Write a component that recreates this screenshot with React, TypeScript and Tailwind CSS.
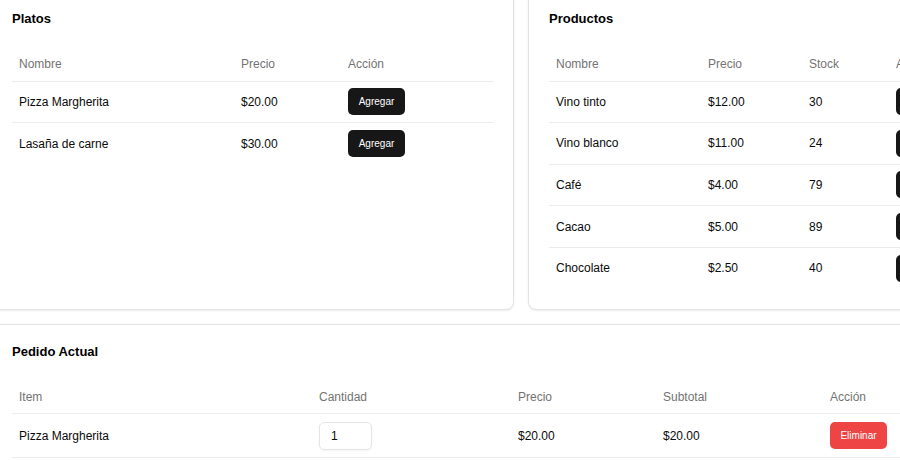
import React from "react";

const platos = [
  { nombre: "Pizza Margherita", precio: "$20.00" },
  { nombre: "Lasaña de carne", precio: "$30.00" },
];

const productos = [
  { nombre: "Vino tinto", precio: "$12.00", stock: 30 },
  { nombre: "Vino blanco", precio: "$11.00", stock: 24 },
  { nombre: "Café", precio: "$4.00", stock: 79 },
  { nombre: "Cacao", precio: "$5.00", stock: 89 },
  { nombre: "Chocolate", precio: "$2.50", stock: 40 },
];

function AddButton() {
  return (
    <button className="w-[57px] h-[27px] rounded-[5px] bg-[#171717] text-white text-[10px] leading-none">
      Agregar
    </button>
  );
}

function Card({ title, children }: { title: string; children: React.ReactNode }) {
  return (
    <div className="bg-white border border-[#e3e3e3] rounded-lg shadow-[0_1px_2px_rgba(0,0,0,0.08)] px-5 pt-5 pb-5">
      <h2 className="text-[13px] leading-[14px] font-bold text-black">{title}</h2>
      <div className="mt-[14px]">{children}</div>
    </div>
  );
}

const th = "px-[7px] pt-2 text-left font-normal text-[12px] text-[#737373]";
const td = "px-[7px] text-[12px] text-[#0a0a0a]";

export default function App() {
  return (
    <div
      className="w-[900px] h-[460px] overflow-hidden bg-white"
      style={{ fontFamily: '"Liberation Sans", Arial, sans-serif' }}
    >
      <div className="w-[1060px] -mt-[9px] -ml-[9px] flex flex-col gap-[14px]">
        <div className="grid grid-cols-2 gap-[14px]">
          <Card title="Platos">
            <table className="w-[481px] table-fixed border-collapse">
              <thead>
                <tr className="h-[41px] border-b border-[#ececec]">
                  <th className={`${th} w-[222px]`}>Nombre</th>
                  <th className={`${th} w-[107px]`}>Precio</th>
                  <th className={th}>Acción</th>
                </tr>
              </thead>
              <tbody>
                {platos.map((p, i) => (
                  <tr
                    key={p.nombre}
                    className={`h-[41.6px] ${i < platos.length - 1 ? "border-b border-[#ececec]" : ""}`}
                  >
                    <td className={td}>{p.nombre}</td>
                    <td className={td}>{p.precio}</td>
                    <td className={td}>
                      <AddButton />
                    </td>
                  </tr>
                ))}
              </tbody>
            </table>
          </Card>

          <Card title="Productos">
            <table className="w-[481px] table-fixed border-collapse">
              <thead>
                <tr className="h-[41px] border-b border-[#ececec]">
                  <th className={`${th} w-[152px]`}>Nombre</th>
                  <th className={`${th} w-[101px]`}>Precio</th>
                  <th className={`${th} w-[87px]`}>Stock</th>
                  <th className={th}>Acción</th>
                </tr>
              </thead>
              <tbody>
                {productos.map((p, i) => (
                  <tr
                    key={p.nombre}
                    className={`h-[41.6px] ${i < productos.length - 1 ? "border-b border-[#ececec]" : ""}`}
                  >
                    <td className={td}>{p.nombre}</td>
                    <td className={td}>{p.precio}</td>
                    <td className={td}>{p.stock}</td>
                    <td className={td}>
                      <AddButton />
                    </td>
                  </tr>
                ))}
              </tbody>
            </table>
          </Card>
        </div>

        <Card title="Pedido Actual">
          <table className="w-[1018px] table-fixed border-collapse">
            <thead>
              <tr className="h-[41px] border-b border-[#ececec]">
                <th className={`${th} w-[300px]`}>Item</th>
                <th className={`${th} w-[199px]`}>Cantidad</th>
                <th className={`${th} w-[145px]`}>Precio</th>
                <th className={`${th} w-[167px]`}>Subtotal</th>
                <th className={th}>Acción</th>
              </tr>
            </thead>
            <tbody>
              <tr className="h-[44px] border-b border-[#ececec]">
                <td className={td}>Pizza Margherita</td>
                <td className={td}>
                  <input
                    type="number"
                    defaultValue={1}
                    className="w-[53px] h-[28px] rounded-[5px] border border-[#e5e5e5] pl-[11px] text-[12px] text-[#0a0a0a] shadow-[0_1px_2px_rgba(0,0,0,0.05)] outline-none [appearance:textfield] [&::-webkit-inner-spin-button]:appearance-none"
                  />
                </td>
                <td className={td}>$20.00</td>
                <td className={td}>$20.00</td>
                <td className={td}>
                  <button className="w-[57px] h-[27px] rounded-[5px] bg-[#ef4444] text-white text-[10px] leading-none">
                    Eliminar
                  </button>
                </td>
              </tr>
            </tbody>
          </table>
        </Card>
      </div>
    </div>
  );
}
